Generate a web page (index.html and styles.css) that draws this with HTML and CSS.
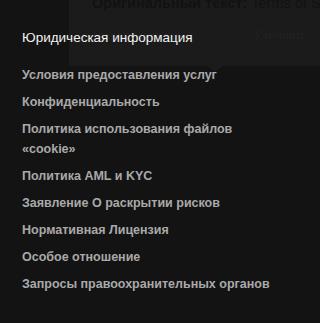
FILE: index.html
```html
<!DOCTYPE html>
<html lang="ru">
<head>
<meta charset="utf-8">
<link rel="stylesheet" href="styles.css">
</head>
<body>
<div class="page">
  <section class="legal">
    <h3 class="legal-title">Юридическая информация</h3>
    <ul class="legal-list">
      <li><a href="#">Условия предоставления услуг</a></li>
      <li><a href="#">Конфиденциальность</a></li>
      <li><a href="#">Политика использования файлов «cookie»</a></li>
      <li><a href="#">Политика AML и KYC</a></li>
      <li><a href="#">Заявление О раскрытии рисков</a></li>
      <li><a href="#">Нормативная Лицензия</a></li>
      <li><a href="#">Особое отношение</a></li>
      <li><a href="#">Запросы правоохранительных органов</a></li>
    </ul>
  </section>
  <div class="tip">
    <div class="tip-line1"><b>Оригинальный текст:</b> Terms of Service</div>
    <div class="tip-line2"><span>Оцените перевод</span><span class="tip-right">Улучшить</span></div>
    <div class="tip-arrow"></div>
  </div>
</div>
</body>
</html>
```
FILE: styles.css
```css
html, body {
  margin: 0;
  padding: 0;
  background: #131313;
}
.page {
  position: relative;
  height: 323px;
  overflow: hidden;
  font-family: "Liberation Sans", Arial, sans-serif;
}
.legal {
  position: relative;
  z-index: 2;
  padding: 29px 0 0 22px;
  width: 250px;
}
.legal-title {
  margin: 0 0 18px 0;
  font-size: 13.5px;
  line-height: 18px;
  font-weight: normal;
  color: #f2f2f2;
}
.legal-list {
  list-style: none;
  margin: 0;
  padding: 0;
  display: flex;
  flex-direction: column;
  gap: 7px;
}
.legal-list li {
  font-size: 12.5px;
  line-height: 20px;
  font-weight: bold;
}
.legal-list a {
  color: #a9a9a9;
  text-decoration: none;
}
.tip {
  position: absolute;
  z-index: 1;
  left: 69px;
  right: 0;
  top: -10px;
  height: 76px;
  background: #1b1b1b;
}
.tip-line1 {
  position: absolute;
  left: 23px;
  top: 3px;
  font-size: 14.5px;
  line-height: 20px;
  color: #121212;
  white-space: nowrap;
}
.tip-line2 {
  position: absolute;
  left: 24px;
  top: 38px;
  font-size: 12px;
  line-height: 14px;
  color: #222222;
  white-space: nowrap;
  font-family: "Liberation Serif", serif;
}
.tip-right {
  margin-left: 74px;
}
.tip-arrow {
  position: absolute;
  left: 138px;
  top: 76px;
  width: 0;
  height: 0;
  border-left: 8px solid transparent;
  border-right: 8px solid transparent;
  border-top: 6px solid #1b1b1b;
}
```
